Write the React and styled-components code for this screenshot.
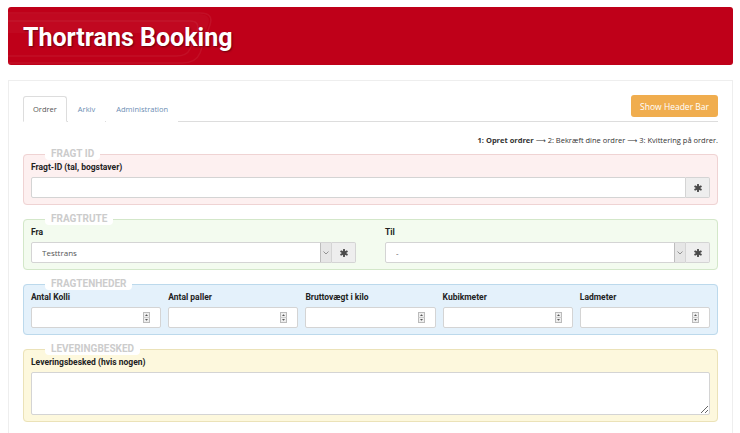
import React from 'react'
import styled, { createGlobalStyle } from 'styled-components';

const GlobalStyle = createGlobalStyle`
  body {
    margin: 7px 7px 0 8px;
    font-family: Roboto, "Liberation Sans", sans-serif;
    background: #fff;
    color: #222;
    overflow: hidden;
  }
  * { box-sizing: border-box; }
`;

const Header = styled.header`
  position: relative;
  height: 58px;
  background: #bf0019;
  border-radius: 3px;
  display: flex;
  align-items: center;
  padding-left: 15px;
  overflow: hidden;
`;

const Swoosh = styled.svg`
  position: absolute;
  left: 0;
  top: 0;
`;

const Title = styled.h1`
  position: relative;
  margin: 2px 0 0;
  font-size: 25px;
  font-weight: 700;
  color: #fff;
  text-shadow: 1px 1px 2px rgba(0,0,0,0.45);
`;

const Panel = styled.div`
  margin-top: 15px;
  border: 1px solid #eee;
  border-bottom: none;
  padding: 15px 14px 0 14px;
  min-height: 360px;
`;

const TabBar = styled.div`
  display: flex;
  align-items: flex-start;
  height: 26px;
  border-bottom: 1px solid #ddd;
`;

const Tab = styled.a`
  display: flex;
  align-items: center;
  height: 26px;
  padding: 0 9px;
  font-size: 7.5px;
  font-family: "Open Sans", Roboto, sans-serif;
  color: ${p => (p.$active ? '#555' : '#6b8db3')};
  border: 1px solid ${p => (p.$active ? '#ddd' : 'transparent')};
  border-bottom-color: ${p => (p.$active ? '#fff' : 'transparent')};
  border-radius: 3px 3px 0 0;
  background: #fff;
  cursor: pointer;
  & + & { margin-left: 1px; }
`;

const HeaderButton = styled.button`
  margin: -1px 0 0 auto;
  height: 22px;
  padding: 0 9px;
  background: #f0ad4e;
  color: #fff;
  border: none;
  border-radius: 3px;
  font-size: 8.5px;
  font-family: "Open Sans", Roboto, sans-serif;
  cursor: pointer;
`;

const Steps = styled.div`
  text-align: right;
  font-size: 7.5px;
  font-family: "Open Sans", Roboto, sans-serif;
  color: #333;
  margin: 12px 0 1px;
  line-height: 12px;
  b { font-weight: 700; }
`;

const Arr = styled.span`
  font-family: "DejaVu Sans", sans-serif;
  font-size: 7px;
`;

const Fieldset = styled.fieldset`
  margin: 0 0 8px;
  border: 1px solid ${p => p.$border};
  background: ${p => p.$bg};
  border-radius: 4px;
  padding: 0 7px 6px;
  min-width: 0;
`;

const Legend = styled.legend`
  margin-left: 14px;
  padding: 0 6px;
  background: #fff;
  border-radius: 4px;
  color: #ccc;
  font-size: 10px;
  font-weight: 700;
  line-height: 12px;
`;

const Label = styled.label`
  display: block;
  font-size: 8.5px;
  font-weight: 700;
  line-height: 12px;
  margin: 1px 0 4px;
  color: #222;
  white-space: nowrap;
`;

const InputGroup = styled.div`
  display: flex;
  height: 21px;
`;

const TextInput = styled.input`
  flex: 1;
  min-width: 0;
  height: 21px;
  border: 1px solid #d4d4d4;
  border-radius: 2px 0 0 2px;
  background: #fff;
  padding: 0 10px;
  font-size: 8px;
  outline: none;
`;

const Addon = styled.span`
  width: 24px;
  display: flex;
  align-items: center;
  justify-content: center;
  background: #eee;
  border: 1px solid #d4d4d4;
  border-left: none;
  border-radius: 0 2px 2px 0;
`;

const SelectBox = styled.div`
  flex: 1;
  min-width: 0;
  display: flex;
  border: 1px solid #d4d4d4;
  border-radius: 2px 0 0 2px;
  background: #fff;
`;

const Select = styled.select`
  flex: 1;
  min-width: 0;
  appearance: none;
  border: none;
  background: transparent;
  padding: 0 10px;
  font-size: 8px;
  font-family: "Open Sans", Roboto, sans-serif;
  color: #555;
  outline: none;
`;

const Arrow = styled.span`
  width: 11px;
  display: flex;
  align-items: center;
  justify-content: center;
  background: #e6e6e6;
  border-left: 1px solid #bdbdbd;
`;

const RouteGrid = styled.div`
  display: grid;
  grid-template-columns: minmax(0, 1fr) minmax(0, 1fr);
  column-gap: 29px;
`;

const UnitGrid = styled.div`
  display: grid;
  grid-template-columns: repeat(5, minmax(0, 1fr));
  column-gap: 7px;
`;

const NumberBox = styled.div`
  display: flex;
  align-items: center;
  height: 21px;
  min-width: 0;
  border: 1px solid #d4d4d4;
  border-radius: 2px;
  background: #fff;
  padding-right: 10px;
`;

const NumberInput = styled.input`
  flex: 1;
  width: 0;
  min-width: 0;
  border: none;
  background: transparent;
  height: 19px;
  padding: 0 8px;
  font-size: 8px;
  outline: none;
`;

const TextArea = styled.textarea`
  display: block;
  width: 100%;
  height: 43px;
  border: 1px solid #d4d4d4;
  border-radius: 2px;
  background: #fff;
  resize: vertical;
  outline: none;
`;

const Asterisk = () => (
  <svg width="8" height="8" viewBox="0 0 10 10">
    <g stroke="#4a4a4a" strokeWidth="2.4" strokeLinecap="round">
      <line x1="5" y1="1" x2="5" y2="9" />
      <line x1="1.5" y1="3" x2="8.5" y2="7" />
      <line x1="1.5" y1="7" x2="8.5" y2="3" />
    </g>
  </svg>
);

const Chevron = () => (
  <svg width="6" height="4" viewBox="0 0 6 4">
    <path d="M0.5 0.5 L3 3 L5.5 0.5" fill="none" stroke="#888" strokeWidth="0.9" />
  </svg>
);

const Spinner = () => (
  <svg width="7" height="11" viewBox="0 0 7 11">
    <rect x="0.5" y="0.5" width="6" height="10" fill="#eee" stroke="#bbb" />
    <line x1="0.5" y1="5.5" x2="6.5" y2="5.5" stroke="#ccc" />
    <path d="M2 4 L3.5 2.2 L5 4 Z" fill="#555" />
    <path d="M2 7 L3.5 8.8 L5 7 Z" fill="#555" />
  </svg>
);

const RouteField = ({ label, value }) => (
  <div>
    <Label>{label}</Label>
    <InputGroup>
      <SelectBox>
        <Select defaultValue={value}>
          <option>{value}</option>
        </Select>
        <Arrow><Chevron /></Arrow>
      </SelectBox>
      <Addon><Asterisk /></Addon>
    </InputGroup>
  </div>
);

const units = ['Antal Kolli', 'Antal paller', 'Bruttovægt i kilo', 'Kubikmeter', 'Ladmeter'];

const App = () => {
  return (
    <>
      <GlobalStyle />
      <Header>
        <Swoosh width="230" height="58" viewBox="0 0 230 58">
          <g fill="none" stroke="rgba(255,255,255,0.06)" strokeWidth="1.5">
            <path d="M0 6 H192 Q206 6 202 18 L192 46 Q188 56 174 56 H0" />
            <path d="M0 14 H182 Q192 14 189 24 L182 42 Q179 49 168 49 H0" />
          </g>
          <path d="M0 7 H191 Q204 7 200 18 L197 26 H0 Z" fill="rgba(255,255,255,0.03)" />
        </Swoosh>
        <Title>Thortrans Booking</Title>
      </Header>
      <Panel>
        <TabBar>
          <Tab $active>Ordrer</Tab>
          <Tab>Arkiv</Tab>
          <Tab>Administration</Tab>
          <HeaderButton>Show Header Bar</HeaderButton>
        </TabBar>
        <Steps>
          <b>1: Opret ordrer</b> <Arr>⟶</Arr> 2: Bekræft dine ordrer <Arr>⟶</Arr> 3: Kvittering på ordrer.
        </Steps>

        <Fieldset $bg="#fdf0f0" $border="#efd3d3">
          <Legend>FRAGT ID</Legend>
          <Label>Fragt-ID (tal, bogstaver)</Label>
          <InputGroup>
            <TextInput />
            <Addon><Asterisk /></Addon>
          </InputGroup>
        </Fieldset>

        <Fieldset $bg="#f3fbef" $border="#d3e7c9">
          <Legend>FRAGTRUTE</Legend>
          <RouteGrid>
            <RouteField label="Fra" value="Testtrans" />
            <RouteField label="Til" value="-" />
          </RouteGrid>
        </Fieldset>

        <Fieldset $bg="#e4f1fb" $border="#bcd9ec">
          <Legend>FRAGTENHEDER</Legend>
          <UnitGrid>
            {units.map(u => (
              <div key={u}>
                <Label>{u}</Label>
                <NumberBox>
                  <NumberInput />
                  <Spinner />
                </NumberBox>
              </div>
            ))}
          </UnitGrid>
        </Fieldset>

        <Fieldset $bg="#fdf8dd" $border="#ebe2b8">
          <Legend>LEVERINGBESKED</Legend>
          <Label>Leveringsbesked (hvis nogen)</Label>
          <TextArea />
        </Fieldset>
      </Panel>
    </>
  )
}

export default App
